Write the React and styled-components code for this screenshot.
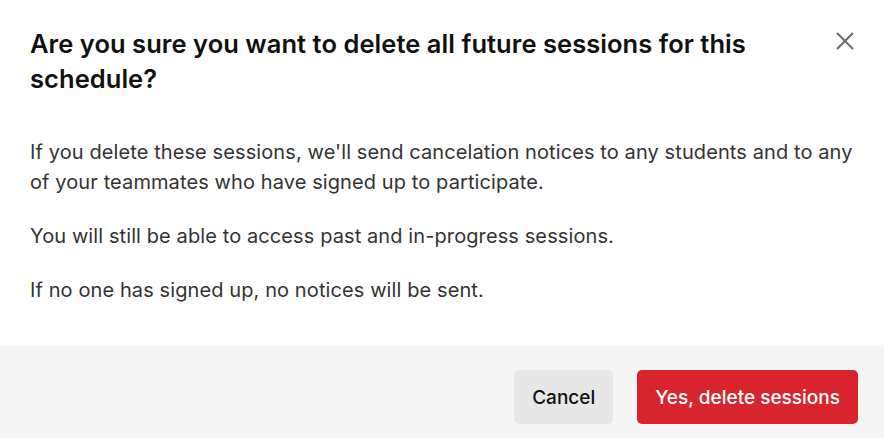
import styled, { createGlobalStyle } from 'styled-components';

const GlobalStyle = createGlobalStyle`
  html, body {
    margin: 0;
    padding: 0;
    background: #fff;
    overflow: hidden;
  }
  body {
    font-family: Inter, "Liberation Sans", sans-serif;
  }
`;

const Dialog = () => {
  return (
    <Modal>
      <Header>
        <Title>Are you sure you want to delete all future sessions for this schedule?</Title>
        <CloseButton aria-label="Close">
          <svg width="20" height="20" viewBox="0 0 20 20" fill="none">
            <path d="M2 2L18 18M18 2L2 18" stroke="#6b6b6b" strokeWidth="2" />
          </svg>
        </CloseButton>
      </Header>
      <Body>
        <p>
          If you delete these sessions, we'll send cancelation notices to any students and to any
          of your teammates who have signed up to participate.
        </p>
        <p>You will still be able to access past and in-progress sessions.</p>
        <p>If no one has signed up, no notices will be sent.</p>
      </Body>
      <Footer>
        <Button>Cancel</Button>
        <Button danger>Yes, delete sessions</Button>
      </Footer>
    </Modal>
  );
};

export default function App() {
  return (
    <>
      <GlobalStyle />
      <Dialog />
    </>
  );
}

const Modal = styled.div`
  width: 884px;
  height: 438px;
  display: flex;
  flex-direction: column;
  background: #fff;
  overflow: hidden;
`;

const Header = styled.div`
  flex: none;
  display: flex;
  align-items: flex-start;
  justify-content: space-between;
  padding: 26px 24px 0 30px;
`;

const Title = styled.h2`
  margin: 0;
  max-width: 740px;
  font-size: 25.5px;
  line-height: 35px;
  font-weight: 600;
  color: #111;
  letter-spacing: 0.05px;
`;

const CloseButton = styled.button`
  border: 0;
  background: none;
  padding: 0;
  width: 30px;
  height: 30px;
  display: flex;
  align-items: center;
  justify-content: center;
  cursor: pointer;
`;

const Body = styled.div`
  flex: none;
  padding: 41px 30px 41px 30px;
  p {
    margin: 0 0 24px;
    font-size: 20px;
    line-height: 30px;
    color: #333;
    letter-spacing: 0.1px;
  }
  p:last-child {
    margin-bottom: 0;
  }
`;

const Footer = styled.div`
  flex: none;
  height: 102px;
  box-sizing: border-box;
  background: #f5f5f5;
  display: flex;
  align-items: center;
  justify-content: flex-end;
  gap: 24px;
  padding: 0 26px;
`;

const Button = styled.button`
  height: 54px;
  padding: 0 18px;
  border: 0;
  border-radius: 5px;
  font-family: Inter, "Liberation Sans", sans-serif;
  font-size: 19px;
  font-weight: 500;
  background: ${p => (p.danger ? '#d8252d' : '#e7e7e7')};
  color: ${p => (p.danger ? '#fff' : '#111')};
  cursor: pointer;
`;
